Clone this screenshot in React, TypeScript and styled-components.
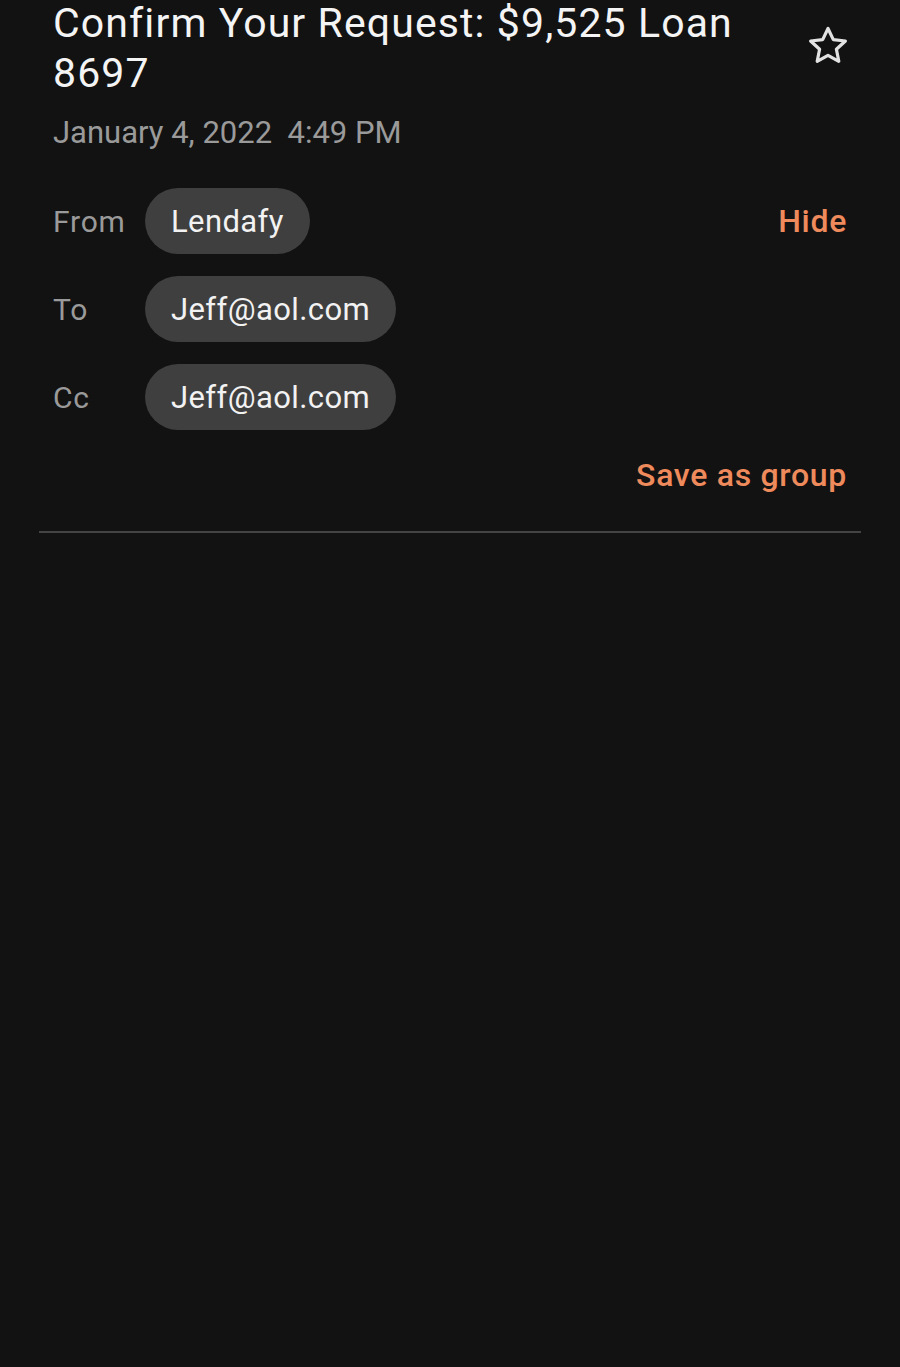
import React from "react";
import styled, { createGlobalStyle } from "styled-components";

const GlobalStyle = createGlobalStyle`
  html, body {
    margin: 0;
    padding: 0;
    background: #121212;
  }
  body {
    font-family: Roboto, "Noto Sans", "Liberation Sans", sans-serif;
    min-height: 1367px;
  }
`;

const recipients = [
  { label: "From", name: "Lendafy", action: "Hide" },
  { label: "To", name: "Jeff@aol.com" },
  { label: "Cc", name: "Jeff@aol.com" },
];

const StarIcon = () => (
  <svg width="44" height="42" viewBox="0 0 44 42" fill="none">
    <path
      d="M22 3.5 L27.3 14.6 L39.4 16 L30.4 24.3 L32.8 36.3 L22 30.3 L11.2 36.3 L13.6 24.3 L4.6 16 L16.7 14.6 Z"
      stroke="#e2e2e2"
      strokeWidth="3.2"
      strokeLinejoin="round"
    />
  </svg>
);

const App = () => {
  return (
    <>
      <GlobalStyle />
      <Page>
        <Header>
          <TitleRow>
            <Title>Confirm Your Request: $9,525 Loan 8697</Title>
            <StarButton>
              <StarIcon />
            </StarButton>
          </TitleRow>
          <DateLine>January 4, 2022&nbsp;&nbsp;4:49 PM</DateLine>
          <Recipients>
            {recipients.map((r, i) => (
              <Row key={i}>
                <Label>{r.label}</Label>
                <Chip>{r.name}</Chip>
                {r.action && <Action>{r.action}</Action>}
              </Row>
            ))}
          </Recipients>
          <SaveRow>
            <Action>Save as group</Action>
          </SaveRow>
        </Header>
        <Divider />
      </Page>
    </>
  );
};

export default App;

const Page = styled.div`
  padding: 0 39px;
  display: flex;
  flex-direction: column;
`;
const Header = styled.div`
  padding: 0 14px;
  display: flex;
  flex-direction: column;
`;
const TitleRow = styled.div`
  display: flex;
  align-items: flex-start;
  justify-content: space-between;
  margin-top: -2px;
`;
const Title = styled.h1`
  margin: 0;
  width: 720px;
  font-size: 41px;
  line-height: 50px;
  letter-spacing: 1.1px;
  font-weight: 400;
  color: #f4f4f4;
`;
const StarButton = styled.div`
  margin-top: 27px;
  margin-right: -3px;
  display: flex;
`;
const DateLine = styled.div`
  margin-top: 15px;
  font-size: 31px;
  line-height: 40px;
  color: #9a9a9a;
`;
const Recipients = styled.div`
  margin-top: 35px;
  display: flex;
  flex-direction: column;
  gap: 22px;
`;
const Row = styled.div`
  display: flex;
  align-items: center;
`;
const Label = styled.span`
  width: 92px;
  font-size: 30px;
  letter-spacing: 0.8px;
  color: #9a9a9a;
`;
const Chip = styled.span`
  height: 66px;
  padding: 0 26px;
  border-radius: 33px;
  background: #3f3f3f;
  color: #f2f2f2;
  font-size: 31px;
  letter-spacing: 0.4px;
  display: flex;
  align-items: center;
`;
const Action = styled.span`
  margin-left: auto;
  font-size: 32px;
  line-height: 40px;
  letter-spacing: 0.7px;
  font-weight: 500;
  color: #ee8a5b;
`;
const SaveRow = styled.div`
  margin-top: 25px;
  display: flex;
`;
const Divider = styled.div`
  margin-top: 36px;
  height: 2px;
  background: #444444;
`;
